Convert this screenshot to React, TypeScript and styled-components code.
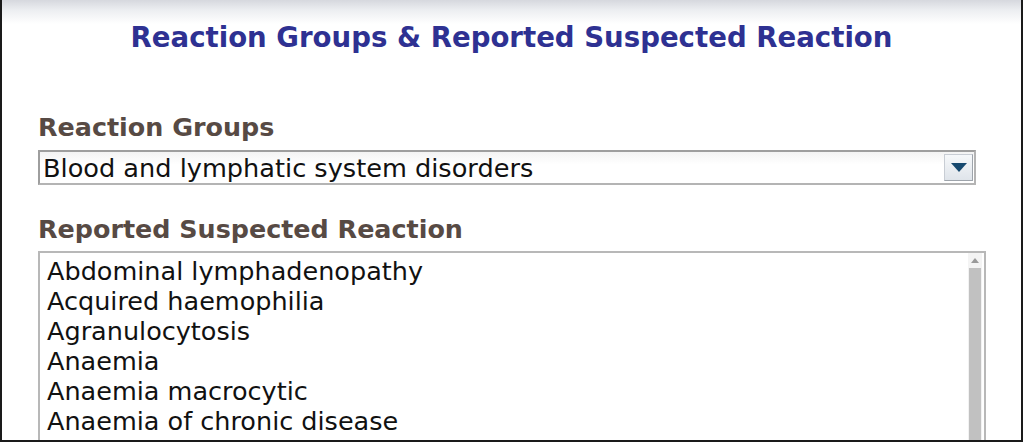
import React from "react";
import styled, { createGlobalStyle } from "styled-components";

const Global = createGlobalStyle`
  html, body { margin: 0; padding: 0; background: #fff; }
  body { width: 1024px; height: 442px; overflow: hidden; font-family: "DejaVu Sans", Verdana, sans-serif; }
`;

const Frame = styled.div`
  box-sizing: border-box;
  width: 1023px;
  height: 442px;
  border-left: 2px solid #1a1a1a;
  border-right: 2px solid #1a1a1a;
  border-bottom: 2px solid #1a1a1a;
  background: linear-gradient(to bottom, #d6d8de 0px, #eceef1 10px, #ffffff 24px);
  overflow: hidden;
  display: flex;
  flex-direction: column;
`;

const Title = styled.h1`
  margin: 21px 0 0;
  text-align: center;
  font-size: 27.6px;
  font-weight: bold;
  color: #2e3192;
  line-height: 34px;
`;

const Body = styled.div`
  padding: 57px 0 0 36px;
  display: flex;
  flex-direction: column;
`;

const Label = styled.div`
  font-size: 25.4px;
  font-weight: bold;
  color: #574a44;
  line-height: 30px;
`;

const Select = styled.div`
  box-sizing: border-box;
  margin-top: 8px;
  width: 938px;
  height: 35px;
  border: 2px solid #b4b4b4;
  border-top-color: #9e9e9e;
  border-left-color: #9e9e9e;
  display: flex;
  align-items: center;
  justify-content: space-between;
  padding: 0 1px 0 3px;
  background: linear-gradient(to bottom, #f3f3f3, #ffffff 40%);
`;

const SelectText = styled.span`
  font-size: 25.6px;
  color: #111;
`;

const DropButton = styled.div`
  box-sizing: border-box;
  width: 29px;
  height: 27px;
  border: 1px solid #c8cdd4;
  border-right-color: #9ea4ab;
  border-bottom-color: #9ea4ab;
  background: linear-gradient(to bottom, #f6f8fa, #dfe4ea);
  display: flex;
  align-items: center;
  justify-content: center;
`;

const Gap = styled.div`
  height: 29px;
`;

const ListBox = styled.div`
  box-sizing: border-box;
  margin-top: 7px;
  width: 948px;
  height: 200px;
  border: 2px solid #b8b8b8;
  display: flex;
  background: #fff;
`;

const Items = styled.ul`
  list-style: none;
  margin: 0;
  padding: 3px 0 0 7px;
  flex: 1;
`;

const Item = styled.li`
  font-size: 25.5px;
  line-height: 30px;
  color: #111;
`;

const Scrollbar = styled.div`
  width: 14px;
  margin-right: 2px;
  display: flex;
  flex-direction: column;
  background: #f2f2f2;
`;

const ScrollUp = styled.div`
  height: 15px;
  display: flex;
  align-items: center;
  justify-content: center;
  background: #f4f4f4;
`;

const Thumb = styled.div`
  flex: 1;
  margin: 0 1px;
  background: #c1c1c1;
`;

const items = [
  "Abdominal lymphadenopathy",
  "Acquired haemophilia",
  "Agranulocytosis",
  "Anaemia",
  "Anaemia macrocytic",
  "Anaemia of chronic disease",
];

export default function App() {
  return (
    <>
      <Global />
      <Frame>
        <Title>Reaction Groups &amp; Reported Suspected Reaction</Title>
        <Body>
          <Label>Reaction Groups</Label>
          <Select>
            <SelectText>Blood and lymphatic system disorders</SelectText>
            <DropButton>
              <svg width="16" height="9" viewBox="0 0 16 9">
                <path d="M0 0 H16 L8 9 Z" fill="#17496f" />
              </svg>
            </DropButton>
          </Select>
          <Gap />
          <Label>Reported Suspected Reaction</Label>
          <ListBox>
            <Items>
              {items.map((t) => (
                <Item key={t}>{t}</Item>
              ))}
            </Items>
            <Scrollbar>
              <ScrollUp>
                <svg width="8" height="5" viewBox="0 0 8 5">
                  <path d="M0 5 L4 0 L8 5 Z" fill="#9a9a9a" />
                </svg>
              </ScrollUp>
              <Thumb />
            </Scrollbar>
          </ListBox>
        </Body>
      </Frame>
    </>
  );
}
